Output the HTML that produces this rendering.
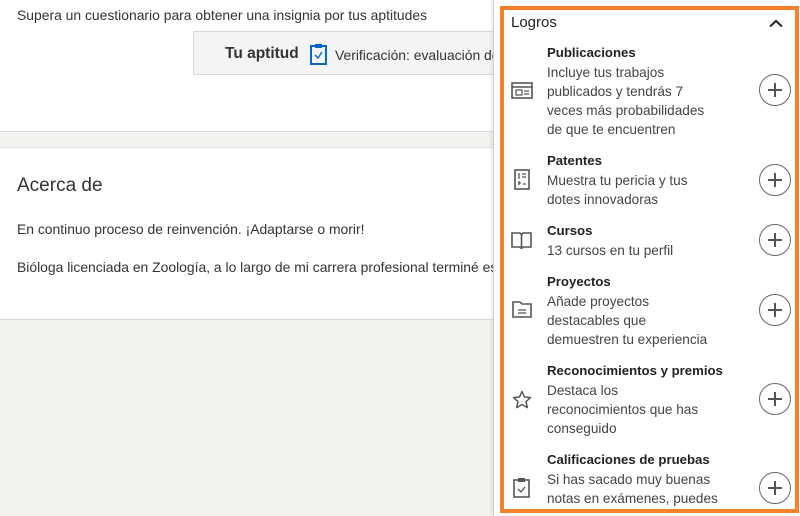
<!DOCTYPE html>
<html><head><meta charset="utf-8"><style>
*{margin:0;padding:0;box-sizing:border-box}
body{width:800px;height:516px;overflow:hidden;background:#f3f2ef;font-family:"Liberation Sans",sans-serif;color:#333;position:relative}
.a{position:absolute;white-space:nowrap}
.card{position:absolute;left:0;width:493px;background:#fff;border-bottom:1px solid #d6d6d6}
.t{font-size:13.9px;color:#333}
#panel{position:absolute;left:493px;top:0;width:307px;height:516px;background:#fff;border-left:1px solid #d0d0d0;box-shadow:-2px 0 3px rgba(0,0,0,.08)}
#box{position:absolute;left:500px;top:6px;width:299px;height:507px;border:4px solid #f5822a;overflow:hidden}
.h{font-size:13.2px;font-weight:bold;color:#222}
.d{font-size:13.6px;color:#444;line-height:19px}
.plus{position:absolute;width:32px;height:32px;border:1px solid #666;border-radius:50%;left:759px}
.plus:before,.plus:after{content:"";position:absolute;background:#555;left:50%;top:50%}
.plus:before{width:14px;height:1.4px;margin:-0.7px 0 0 -7px}
.plus:after{width:1.4px;height:14px;margin:-7px 0 0 -0.7px}
svg.i{position:absolute;left:511px}
</style></head><body>
<div class="card" style="top:0;height:132px"></div>
<div class="a t" style="left:17px;top:7px">Supera un cuestionario para obtener una insignia por tus aptitudes</div>
<div class="a" style="left:193px;top:31px;width:310px;height:44px;background:#f3f4f6;border:1px solid #d8d8d8;border-radius:2px"></div>
<div class="a" style="left:225px;top:45px;font-size:15.5px;font-weight:bold;color:#333">Tu aptitud</div>
<svg class="a" style="left:310px;top:43px" width="17" height="22" viewBox="0 0 17 22"><rect x="1" y="3" width="15" height="18" fill="none" stroke="#0a66c2" stroke-width="2"/><rect x="5" y="1" width="7" height="4" fill="#0a66c2"/><path d="M5 12l3 3 4-6" fill="none" stroke="#0a66c2" stroke-width="1.4"/></svg>
<div class="a t" style="left:335px;top:47px">Verificación: evaluación de</div>
<div class="card" style="top:147px;height:173px;border-top:1px solid #e0e0e0"></div>
<div class="a" style="left:17px;top:175px;font-size:19px;color:#333">Acerca de</div>
<div class="a t" style="left:17px;top:221px">En continuo proceso de reinvención. ¡Adaptarse o morir!</div>
<div class="a t" style="left:17px;top:259px">Bióloga licenciada en Zoología, a lo largo de mi carrera profesional terminé es</div>
<div id="panel"></div>
<div id="box"></div>
<div class="a" style="left:511px;top:14px;font-size:15px;color:#222">Logros</div>
<svg class="a" style="left:769px;top:19px" width="14" height="9" viewBox="0 0 14 9"><path d="M1 7.5L7 2l6 5.5" fill="none" stroke="#222" stroke-width="2"/></svg>

<div class="a h" style="left:547px;top:45px">Publicaciones</div>
<div class="a d" style="left:547px;top:63px">Incluye tus trabajos<br>publicados y tendrás 7<br>veces más probabilidades<br>de que te encuentren</div>
<svg class="i" style="top:82px" width="22" height="17" viewBox="0 0 22 17"><rect x="1" y="1" width="20" height="15" fill="none" stroke="#555" stroke-width="1.6"/><line x1="1" y1="5" x2="21" y2="5" stroke="#555" stroke-width="1.6"/><rect x="5" y="8" width="6" height="5" fill="none" stroke="#555" stroke-width="1.2"/><path d="M13 9h5M13 12h5" stroke="#555" stroke-width="1.2"/></svg>
<div class="plus" style="top:74px"></div>

<div class="a h" style="left:547px;top:153px">Patentes</div>
<div class="a d" style="left:547px;top:171px">Muestra tu pericia y tus<br>dotes innovadoras</div>
<svg class="i" style="top:169px;left:514px" width="16" height="21" viewBox="0 0 16 21"><rect x="1" y="1" width="14" height="19" fill="none" stroke="#555" stroke-width="1.6"/><path d="M5 4v6M8 5h4M8 8h4M4 14h3M5 12v4M9 15h3" stroke="#555" stroke-width="1.3"/></svg>
<div class="plus" style="top:164px"></div>

<div class="a h" style="left:547px;top:223px">Cursos</div>
<div class="a d" style="left:547px;top:241px">13 cursos en tu perfil</div>
<svg class="i" style="top:232px" width="21" height="17" viewBox="0 0 21 17"><path d="M1 1h8l1.5 1.5L12 1h8v14h-8l-1.5 1.5L9 15H1z" fill="none" stroke="#555" stroke-width="1.6"/><line x1="10.5" y1="2" x2="10.5" y2="15" stroke="#555" stroke-width="1.6"/></svg>
<div class="plus" style="top:224px"></div>

<div class="a h" style="left:547px;top:274px">Proyectos</div>
<div class="a d" style="left:547px;top:292px">Añade proyectos<br>destacables que<br>demuestren tu experiencia</div>
<svg class="i" style="top:301px;left:512px" width="20" height="17" viewBox="0 0 20 17"><path d="M1 1h7l2 2h9v13H1z" fill="none" stroke="#555" stroke-width="1.6"/><path d="M6 9h8M6 12h8" stroke="#555" stroke-width="1.3"/></svg>
<div class="plus" style="top:294px"></div>

<div class="a h" style="left:547px;top:363px">Reconocimientos y premios</div>
<div class="a d" style="left:547px;top:381px">Destaca los<br>reconocimientos que has<br>conseguido</div>
<svg class="i" style="top:390px;left:512px" width="20" height="19" viewBox="0 0 20 19"><path d="M10 1.5l2.5 5.5 6 .6-4.5 4 1.3 6L10 14.5 4.7 17.6 6 11.6 1.5 7.6l6-.6z" fill="none" stroke="#555" stroke-width="1.5" stroke-linejoin="round"/></svg>
<div class="plus" style="top:383px"></div>

<div class="a h" style="left:547px;top:452px">Calificaciones de pruebas</div>
<div class="a d" style="left:547px;top:470px">Si has sacado muy buenas<br>notas en exámenes, puedes</div>
<svg class="i" style="top:477px;left:513px" width="17" height="21" viewBox="0 0 17 21"><rect x="1" y="3" width="15" height="17" fill="none" stroke="#555" stroke-width="1.6"/><rect x="5" y="1" width="7" height="4" fill="#555"/><path d="M5 12l3 3 4-5" fill="none" stroke="#555" stroke-width="1.4"/></svg>
<div class="plus" style="top:472px"></div>
</body></html>
